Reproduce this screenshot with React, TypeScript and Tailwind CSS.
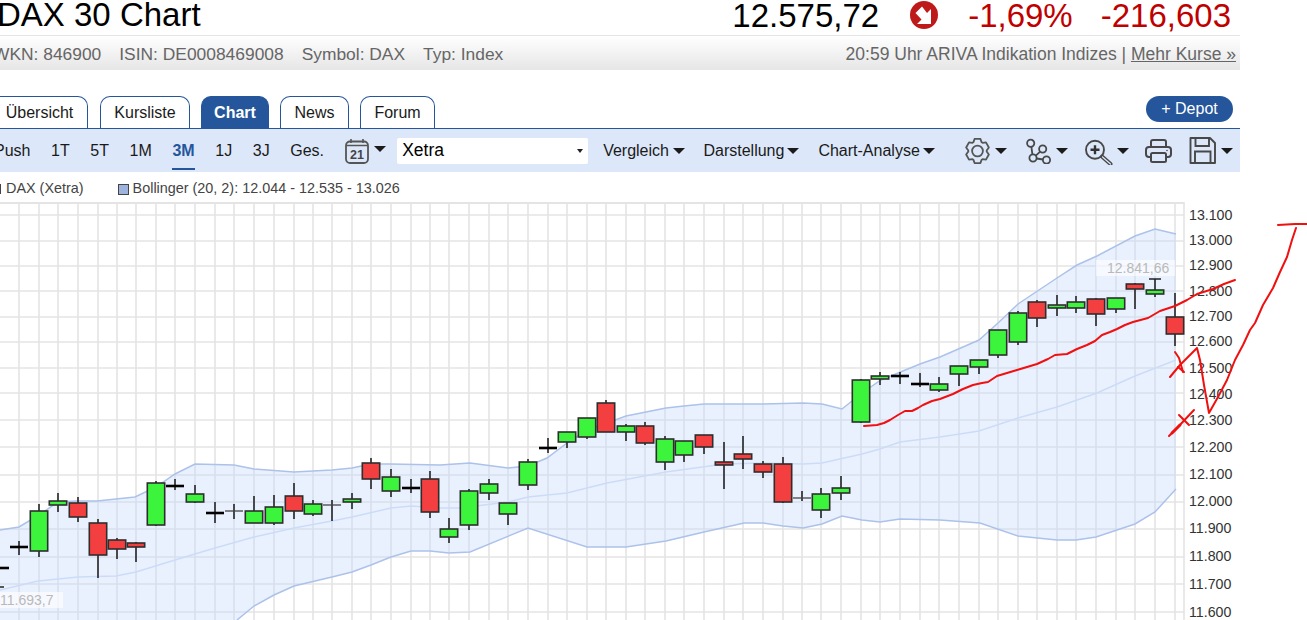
const Caret = ({ className = "" }: { className?: string }) => (
  <svg width="12" height="6" viewBox="0 0 12 6" className={className}>
    <polygon points="0,0 12,0 6,6" fill="#1b1b1b" />
  </svg>
);

type C = [number, number, number, number, number, "g" | "r" | "d" | "t"];
// x, body top, body bottom, wick top, wick bottom, kind
const candles: C[] = [
  [0, 568, 568, 568, 568, "d"], [19, 547, 547, 541, 555, "d"], [39, 511, 551, 504, 557, "g"], [58, 501, 505, 493, 512, "g"],
  [78, 503, 517, 497, 522, "r"], [98, 523, 555, 519, 578, "r"], [117, 540, 549, 538, 559, "r"], [136, 543, 547, 542, 562, "r"],
  [156, 483, 525, 481, 526, "g"], [175, 486, 486, 479, 490, "d"], [195, 494, 502, 485, 503, "g"], [215, 513, 513, 502, 523, "d"],
  [234, 511, 511, 504, 519, "t"], [254, 511, 523, 496, 523, "g"], [274, 507, 523, 495, 525, "g"], [294, 496, 511, 483, 519, "r"],
  [313, 504, 514, 500, 516, "g"], [332, 505, 505, 500, 521, "t"], [352, 499, 502, 493, 509, "g"], [371, 463, 479, 458, 489, "r"],
  [391, 477, 491, 469, 497, "g"], [411, 488, 488, 479, 493, "d"], [430, 479, 512, 471, 518, "r"], [449, 529, 537, 518, 543, "g"],
  [469, 491, 525, 489, 530, "g"], [489, 484, 493, 479, 500, "g"], [508, 503, 514, 503, 525, "g"], [528, 462, 485, 459, 490, "g"],
  [548, 448, 448, 438, 453, "d"], [567, 432, 442, 432, 448, "g"], [587, 418, 437, 418, 439, "g"], [606, 403, 432, 400, 432, "r"],
  [626, 426, 432, 424, 441, "g"], [645, 426, 443, 422, 445, "r"], [665, 439, 462, 436, 470, "g"], [684, 441, 455, 441, 462, "g"],
  [704, 435, 447, 435, 454, "r"], [724, 462, 465, 442, 489, "r"], [743, 454, 459, 436, 469, "r"], [763, 464, 472, 461, 478, "r"],
  [783, 464, 502, 457, 503, "r"], [802, 498, 498, 491, 501, "t"], [821, 494, 510, 488, 518, "g"], [841, 488, 493, 476, 500, "g"],
  [861, 380, 422, 379, 423, "g"], [880, 376, 379, 372, 385, "g"], [900, 376, 376, 372, 384, "d"], [920, 384, 384, 373, 387, "d"],
  [939, 384, 390, 377, 392, "g"], [959, 366, 374, 366, 386, "g"], [979, 360, 367, 360, 374, "g"], [998, 330, 355, 330, 358, "g"],
  [1018, 313, 342, 311, 345, "g"], [1037, 302, 318, 300, 327, "r"], [1057, 305, 308, 295, 316, "g"], [1076, 302, 308, 296, 313, "g"],
  [1096, 299, 314, 298, 326, "r"], [1116, 298, 309, 298, 313, "g"], [1135, 284, 289, 283, 309, "r"], [1155, 290, 294, 279, 297, "g"],
  [1175, 317, 334, 293, 346, "r"],
];

const upper = "0,530 19,527 39,515 58,502 77,501 97,501 135,497 156,487 175,474 195,464 234,465 254,469 294,472 332,470 352,468 371,464 391,464 440,465 470,463 508,468 528,466 547,458 567,443 587,430 607,423 626,416 666,408 684,406 704,404 763,404 803,403 822,404 842,409 862,393 881,380 920,364 940,357 979,340 998,323 1018,304 1057,278 1077,265 1097,256 1135,236 1155,229 1176,234";
const lower = "237,620 254,606 274,595 294,586 332,577 352,572 371,565 391,557 411,551 430,551 449,553 470,552 528,528 587,547 626,547 666,541 704,532 744,523 763,523 783,526 803,528 822,524 842,516 862,520 880,522 900,519 940,520 980,523 1018,536 1057,540 1076,540 1096,537 1135,524 1155,512 1176,489";
const middle = "0,590 38,581 78,577 116,576 136,572 175,560 215,548 254,537 294,528 332,521 352,517 391,508 411,506 440,508 460,508 508,502 528,497 567,493 607,483 666,472 724,464 763,463 803,464 822,463 862,454 880,449 900,442 940,437 979,431 1018,418 1057,407 1097,393 1135,376 1176,360";
const bandReverse = lower.split(" ").reverse().join(" ");

const hLines = [215, 241, 266, 291, 317, 342, 368, 393, 420, 447, 475, 502, 529, 557, 584, 612];
const axis: [string, number][] = [
  ["13.100", 215], ["13.000", 240], ["12.900", 265], ["12.800", 291], ["12.700", 316], ["12.600", 341], ["12.500", 368], ["12.400", 394],
  ["12.300", 420], ["12.200", 447], ["12.100", 474], ["12.000", 501], ["11.900", 528], ["11.800", 556], ["11.700", 584], ["11.600", 612],
];

const trend = "864,426 877,425 884,423 890,420 898,415 905,411 912,411 918,408 923,405 932,401 940,399 953,394 963,389 973,385 982,383 988,382 997,376 1007,373 1017,370 1027,367 1037,364 1048,359 1055,355 1067,354 1077,349 1087,345 1095,341 1102,335 1110,332 1117,329 1125,325 1133,322 1148,318 1160,311 1175,306 1187,300 1197,294 1213,289 1224,284 1235,280";
const forecast = "1170,377 1180,365 1197,348 1200,360 1204,385 1209,413 1218,397 1227,380 1235,360 1243,345 1250,330 1255,323 1263,305 1273,288 1280,272 1287,257 1292,240 1296,228";

function Chart() {
  return (
    <svg width="1307" height="418" viewBox="0 202 1307 418" className="block">
      <g stroke="#e4e4e4" strokeWidth="1.6">
        <line x1="0" x2="1184" y1="203" y2="203" strokeWidth="2" />
        {hLines.map((y) => (
          <line key={y} x1="0" x2="1184" y1={y} y2={y} />
        ))}
        {candles.slice(1).map((c) => (
          <line key={c[0]} x1={c[0]} x2={c[0]} y1="202" y2="620" />
        ))}
        <line x1="1184" x2="1184" y1="202" y2="620" />
      </g>
      <polygon points={`${upper} ${bandReverse} 0,620`} fill="#c5d8fb" fillOpacity="0.36" />
      <polyline points={upper} fill="none" stroke="#acc2ea" strokeWidth="1.5" />
      <polyline points={lower} fill="none" stroke="#acc2ea" strokeWidth="1.5" />
      <polyline points={middle} fill="none" stroke="#cbdcf9" strokeWidth="1.5" />
      <line x1="0" x2="4" y1="587" y2="587" stroke="#222" strokeWidth="1.5" />
      {candles.map(([x, t, b, wt, wb, k]) => (
        <g key={x}>
          <line x1={x} x2={x} y1={wt} y2={wb} stroke="#222" strokeWidth="1.6" />
          {k === "d" || k === "t" ? (
            <line x1={x - 9} x2={x + 9} y1={t} y2={t} stroke={k === "d" ? "#000" : "#444"} strokeWidth={k === "d" ? 2.6 : 1.3} />
          ) : (
            <rect x={x - 8.7} y={t} width="17.4" height={b - t} fill={k === "g" ? "#3cf43c" : "#f33f3f"} stroke="#2e2e2e" strokeWidth="1.6" />
          )}
        </g>
      ))}
      <line x1="1149" x2="1161" y1="279" y2="279" stroke="#222" strokeWidth="1.5" />
      <rect x="1096" y="260" width="79" height="16" fill="#fff" fillOpacity="0.55" />
      <text x="1107" y="268" dominantBaseline="central" fontSize="14" fill="#b9b9b9">12.841,66</text>
      <rect x="0" y="592" width="63" height="16" fill="#fff" fillOpacity="0.6" />
      <text x="0" y="600" dominantBaseline="central" fontSize="14" fill="#b9b9b9">11.693,7</text>
      {axis.map(([t, y]) => (
        <text key={t} x="1189" y={y} dominantBaseline="central" fontSize="14.2" fill="#333">{t}</text>
      ))}
      <g fill="none" stroke="#f01010" strokeWidth="2" strokeLinejoin="round" strokeLinecap="round">
        <polyline points={trend} />
        <polyline points={forecast} />
        <polyline points="1175,352 1179,358 1181,365 1183,372" />
        <polyline points="1178,367 1184,372" />
        <polyline points="1169,436 1177,428 1194,410" />
        <polyline points="1172,433 1180,425" strokeWidth="3" />
        <polyline points="1179,415 1189,425" />
        <polyline points="1278,225 1295,224 1307,224" />
      </g>
    </svg>
  );
}

const gearPath = (() => {
  const c = 12.5;
  const pts: string[] = [];
  for (let i = 0; i < 6; i++) {
    const a = -90 + i * 60;
    [[-27, 9.2], [-14, 11.8], [14, 11.8], [27, 9.2]].forEach(([d, r]) => {
      const t = ((a + d) * Math.PI) / 180;
      pts.push(`${(c + r * Math.cos(t)).toFixed(2)},${(13 + r * 1.06 * Math.sin(t)).toFixed(2)}`);
    });
  }
  return pts.join(" ");
})();

const GearIcon = ({ className = "" }: { className?: string }) => (
  <svg width="25" height="26" viewBox="0 0 25 26" fill="none" stroke="#555" strokeWidth="1.8" strokeLinejoin="round" className={className}>
    <polygon points={gearPath} />
    <circle cx="12.5" cy="13" r="5.4" />
  </svg>
);

const NetworkIcon = ({ className = "" }: { className?: string }) => (
  <svg width="26" height="26" viewBox="0 0 26 26" fill="none" stroke="#484848" strokeWidth="1.8" className={className}>
    <circle cx="4.7" cy="5.3" r="3.6" />
    <circle cx="16.7" cy="11" r="3.6" />
    <circle cx="7" cy="20" r="3.6" />
    <circle cx="20.5" cy="22" r="3.6" />
    <path d="M5.4 8.8 L6.4 16.5 M9.8 17.6 L14.2 13.6 M10.6 20.5 L17 21.5" />
  </svg>
);

const ZoomIcon = ({ className = "" }: { className?: string }) => (
  <svg width="28" height="28" viewBox="0 0 28 28" fill="none" className={className}>
    <circle cx="10" cy="12.7" r="9" stroke="#484848" strokeWidth="1.9" />
    <path d="M5.5 12.7H14.5M10 8.2V17.2" stroke="#333" strokeWidth="2.4" />
    <path d="M17 19.5L25.5 27" stroke="#484848" strokeWidth="4" strokeLinecap="round" />
    <path d="M17.5 20L25.5 27" stroke="#dce8f9" strokeWidth="1.2" strokeLinecap="round" />
  </svg>
);

const PrintIcon = ({ className = "" }: { className?: string }) => (
  <svg width="27" height="24" viewBox="0 0 27 24" fill="none" stroke="#484848" strokeWidth="2" strokeLinejoin="round" className={className}>
    <path d="M6 8V3a2 2 0 0 1 2-2h11a2 2 0 0 1 2 2v5" />
    <path d="M6 18H4a3 3 0 0 1-3-3v-4a3 3 0 0 1 3-3h19a3 3 0 0 1 3 3v4a3 3 0 0 1-3 3h-2" />
    <rect x="6" y="14" width="15" height="9" rx="1.5" />
    <circle cx="22" cy="11.5" r="0.8" fill="#484848" stroke="none" />
  </svg>
);

const SaveIcon = ({ className = "" }: { className?: string }) => (
  <svg width="27" height="27" viewBox="0 0 27 27" fill="none" stroke="#484848" strokeWidth="1.9" className={className}>
    <path d="M1.5 1H21L26 6V26H1.5Z" strokeLinejoin="round" />
    <path d="M6.5 1V9H20V1" />
    <path d="M6 26V14.5H21.5V26" />
  </svg>
);

const CalendarIcon = () => (
  <svg width="24" height="26" viewBox="0 0 24 26" fill="none">
    <rect x="1" y="3.5" width="22" height="21.5" rx="4" stroke="#555" strokeWidth="1.8" />
    <path d="M6 1v4M18 1v4M1 7.5h22" stroke="#555" strokeWidth="1.6" />
    <text x="12" y="21" textAnchor="middle" fontSize="12.5" fontWeight="700" fill="#444">21</text>
  </svg>
);

const ranges = ["Push", "1T", "5T", "1M", "3M", "1J", "3J", "Ges."];
const tabs: [string, string][] = [
  ["Übersicht", "w-[97px] mr-[12px]"],
  ["Kursliste", "w-[90px] mr-[11px]"],
  ["Chart", "w-[68px] mr-[11px] bg-[#25569b] font-bold text-white"],
  ["News", "w-[69px] mr-[11px]"],
  ["Forum", "w-[75px]"],
];

export default function App() {
  return (
    <div className="w-[1307px] h-[620px] overflow-hidden bg-white font-['Liberation_Sans',Arial,sans-serif]">
      <div className="w-[1240px]">
        <div className="h-[35px] flex items-start text-[33px] leading-[33px] text-black">
          <h1 className="-ml-[3px] -mt-[2px] font-normal">DAX 30 Chart</h1>
          <span className="ml-auto -mt-[1px]">12.575,72</span>
          <svg width="28" height="28" viewBox="0 0 28 28" className="ml-[31px] mt-[1px]">
            <circle cx="14" cy="14" r="14" fill="#bf1a1a" />
            <polygon points="21,8 21,23 7,23 11.5,18.5 5.5,12 12,5.5 17,12" fill="#fff" />
          </svg>
          <span className="ml-[30px] -mt-[1px] text-[#c00000]">-1,69%</span>
          <span className="ml-[28px] mr-[9px] -mt-[1px] text-[#c00000]">-216,603</span>
        </div>
        <div className="h-[35px] pt-[2px] border-t border-[#e4e4e4] bg-gradient-to-b from-white to-[#e6e6e6] flex items-center justify-between text-[17.4px] text-[#666]">
          <div className="flex gap-[18px] -ml-[7px]">
            <span>WKN: 846900</span>
            <span>ISIN: DE0008469008</span>
            <span>Symbol: DAX</span>
            <span>Typ: Index</span>
          </div>
          <div className="mr-[4px] text-[17.5px]">
            20:59 Uhr ARIVA Indikation Indizes | <a className="underline">Mehr Kurse »</a>
          </div>
        </div>
        <div className="mt-[26px] h-[32px] flex justify-between items-start">
          <div className="flex -ml-[9px] text-[16px] text-[#1a1a1a]">
            {tabs.map(([t, cls]) => (
              <div
                key={t}
                className={`h-[32px] flex items-center justify-center rounded-t-[10px] border border-b-0 border-[#25569b] ${cls}`}
              >
                {t}
              </div>
            ))}
          </div>
          <div className="mr-[7px] h-[26px] w-[87px] rounded-[13px] bg-[#25569b] text-white text-[16px] flex items-center justify-center">
            + Depot
          </div>
        </div>
        <div className="h-[44px] border-t-[1.5px] border-[#25569b] bg-[#dce8f9] flex items-center text-[16px] text-[#1a1a1a]">
          <div className="flex items-center gap-[20.6px] -ml-[6px]">
            {ranges.map((r) => (
              <span key={r} className={r === "3M" ? "relative font-bold text-[#25569b]" : ""}>
                {r}
                {r === "3M" && <span className="absolute left-0 right-0 top-[29px] h-[2px] bg-[#25569b]" />}
              </span>
            ))}
            <CalendarIcon />
          </div>
          <Caret className="ml-[5px] -mt-[4px]" />
          <div className="ml-[11.5px] w-[191px] h-[26px] bg-white rounded-[2px] flex items-center justify-between pl-[5px] pr-[5px] text-[17.5px] text-black">
            Xetra
            <svg width="6" height="4" viewBox="0 0 6 4"><polygon points="0,0 6,0 3,4" fill="#222" /></svg>
          </div>
          <span className="ml-[15px]">Vergleich</span>
          <Caret className="ml-[4px]" />
          <span className="ml-[18.5px]">Darstellung</span>
          <Caret className="ml-[3px]" />
          <span className="ml-[19px]">Chart-Analyse</span>
          <Caret className="ml-[3px]" />
          <GearIcon className="ml-[30px]" />
          <Caret className="ml-[5px]" />
          <NetworkIcon className="ml-[19px]" />
          <Caret className="ml-[4px]" />
          <ZoomIcon className="ml-[17px]" />
          <Caret className="ml-[4px]" />
          <PrintIcon className="ml-[16px]" />
          <SaveIcon className="ml-[17px]" />
          <Caret className="ml-[5px]" />
        </div>
        <div className="h-[30px] pt-[4px] flex items-center text-[14.4px] text-[#444]">
          <span className="-ml-[9px] w-[10px] h-[10px] border border-[#444] bg-[#9db3dd]" />
          <span className="ml-[5px]">DAX (Xetra)</span>
          <span className="ml-[34px] w-[11px] h-[11px] border border-[#444] bg-[#9db3dd]" />
          <span className="ml-[4px]">Bollinger (20, 2): 12.044 - 12.535 - 13.026</span>
        </div>
      </div>
      <Chart />
    </div>
  );
}
